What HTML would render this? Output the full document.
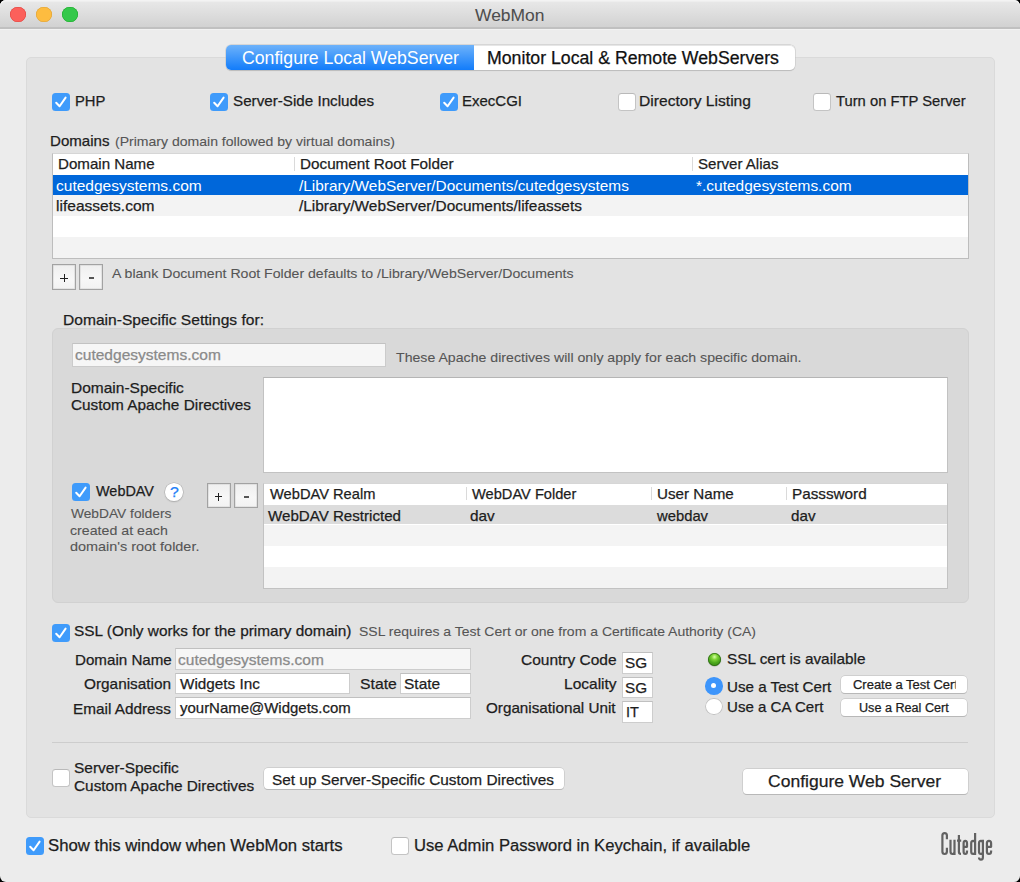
<!DOCTYPE html>
<html><head><meta charset="utf-8"><style>
html,body{margin:0;padding:0;width:1020px;height:882px;overflow:hidden;background:#000}
body{position:relative;font-family:"Liberation Sans", sans-serif}
.b{position:absolute;box-sizing:border-box}
.t{position:absolute;white-space:nowrap;font-family:"Liberation Sans", sans-serif;transform-origin:0 0}
.cb{border-radius:3.5px}
.cb.on{background:#3f9bfb}
.cb.on svg{position:absolute;left:0;top:0}
.cb.off{background:#fff;border:1px solid #c4c4c4;border-top-color:#b9b9b9}
</style></head><body>
<div class="b" style="left:0;top:0;width:1020px;height:882px;background:#ececec;border-radius:6px"></div>
<div class="b" style="left:0px;top:0px;width:1020.00px;height:29.00px;background:linear-gradient(#e8e8e8 5%,#d1d1d1 95%);border-radius:6px 6px 0 0;box-shadow:inset 0 1.5px 0 #f3f3f3"></div>
<div class="b" style="left:0px;top:27.3px;width:1020.00px;height:1.70px;background:#c0c0c0"></div>
<div class="b" style="left:0px;top:29px;width:1020.00px;height:1.00px;background:#f2f2f2"></div>
<div class="b" style="left:10.4px;top:6.6px;width:15.6px;height:15.6px;border-radius:50%;background:#fc605b;box-shadow:inset 0 0 0 0.6px #e0443e"></div>
<div class="b" style="left:36.4px;top:6.6px;width:15.6px;height:15.6px;border-radius:50%;background:#fdbc40;box-shadow:inset 0 0 0 0.6px #dea236"></div>
<div class="b" style="left:62.4px;top:6.6px;width:15.6px;height:15.6px;border-radius:50%;background:#34c84a;box-shadow:inset 0 0 0 0.6px #1aab29"></div>
<div class="t" style="left:474.50px;top:7px;font-size:17px;line-height:17px;color:#4d4d4d;transform:scaleX(1.0269);-webkit-text-stroke:0.05px #4d4d4d;">WebMon</div>
<div class="b" style="left:26px;top:57px;width:969.00px;height:761.00px;background:#e3e3e3;border:1px solid #dadada;border-radius:5px"></div>
<div class="b" style="left:226px;top:45px;width:569.30px;height:25.30px;background:#fff;border-radius:5px;box-shadow:0 0 0 0.5px #c4c4c4, 0 0.8px 0.8px rgba(0,0,0,0.2), inset 0 1px 0 #e6e6e6"></div>
<div class="b" style="left:226px;top:45px;width:248.00px;height:25.30px;background:linear-gradient(#6db2fa,#127cfa);border-radius:5px 0 0 5px"></div>
<div class="t" style="left:241.69px;top:50px;font-size:17.5px;line-height:17.5px;color:#ffffff;transform:scaleX(1.0108);">Configure Local WebServer</div>
<div class="t" style="left:486.99px;top:50px;font-size:17.5px;line-height:17.5px;color:#111;transform:scaleX(1.0118);-webkit-text-stroke:0.25px #111;">Monitor Local &amp; Remote WebServers</div>
<div class="b cb on" style="left:52px;top:93px;width:18px;height:18px"><svg width="18" height="18" viewBox="0 0 18 18"><path d="M4.2 9.8 L7.6 13.3 L13.6 4.6" fill="none" stroke="#fff" stroke-width="2" stroke-linecap="round" stroke-linejoin="round"/></svg></div>
<div class="t" style="left:74.61px;top:93px;font-size:15px;line-height:15px;color:#1d1d1d;transform:scaleX(0.9862);-webkit-text-stroke:0.25px #1d1d1d;">PHP</div>
<div class="b cb on" style="left:210.2px;top:93px;width:18px;height:18px"><svg width="18" height="18" viewBox="0 0 18 18"><path d="M4.2 9.8 L7.6 13.3 L13.6 4.6" fill="none" stroke="#fff" stroke-width="2" stroke-linecap="round" stroke-linejoin="round"/></svg></div>
<div class="t" style="left:232.69px;top:93px;font-size:15px;line-height:15px;color:#1d1d1d;transform:scaleX(1.0130);-webkit-text-stroke:0.25px #1d1d1d;">Server-Side Includes</div>
<div class="b cb on" style="left:439.6px;top:93px;width:18px;height:18px"><svg width="18" height="18" viewBox="0 0 18 18"><path d="M4.2 9.8 L7.6 13.3 L13.6 4.6" fill="none" stroke="#fff" stroke-width="2" stroke-linecap="round" stroke-linejoin="round"/></svg></div>
<div class="t" style="left:462.00px;top:93px;font-size:15px;line-height:15px;color:#1d1d1d;transform:scaleX(1.0000);-webkit-text-stroke:0.25px #1d1d1d;">ExecCGI</div>
<div class="b cb off" style="left:617.5px;top:93px;width:18px;height:18px"></div>
<div class="t" style="left:639.36px;top:93px;font-size:15px;line-height:15px;color:#1d1d1d;transform:scaleX(1.0415);-webkit-text-stroke:0.25px #1d1d1d;">Directory Listing</div>
<div class="b cb off" style="left:813.3px;top:93px;width:18px;height:18px"></div>
<div class="t" style="left:836.30px;top:93px;font-size:15px;line-height:15px;color:#1d1d1d;transform:scaleX(0.9848);-webkit-text-stroke:0.25px #1d1d1d;">Turn on FTP Server</div>
<div class="t" style="left:49.99px;top:133px;font-size:15px;line-height:15px;color:#1d1d1d;transform:scaleX(1.0052);-webkit-text-stroke:0.25px #1d1d1d;">Domains</div>
<div class="t" style="left:115.36px;top:135px;font-size:13.5px;line-height:13.5px;color:#555;transform:scaleX(1.0396);-webkit-text-stroke:0.1px #555;">(Primary domain followed by virtual domains)</div>
<div class="b" style="left:52px;top:153px;width:917.00px;height:106.00px;background:#fff;border:1px solid #bdbdbd;border-top-color:#d6d6d6"></div>
<div class="b" style="left:53px;top:175px;width:915.00px;height:20.00px;background:#0067da"></div>
<div class="b" style="left:53px;top:195px;width:915.00px;height:21.00px;background:#f3f3f3"></div>
<div class="b" style="left:53px;top:237px;width:915.00px;height:21.00px;background:#f3f3f3"></div>
<div class="b" style="left:294px;top:157px;width:1.00px;height:14.00px;background:#dadada"></div>
<div class="b" style="left:692px;top:157px;width:1.00px;height:14.00px;background:#dadada"></div>
<div class="t" style="left:57.79px;top:156px;font-size:15px;line-height:15px;color:#1d1d1d;transform:scaleX(1.0074);-webkit-text-stroke:0.25px #1d1d1d;">Domain Name</div>
<div class="t" style="left:299.58px;top:156px;font-size:15px;line-height:15px;color:#1d1d1d;transform:scaleX(1.0173);-webkit-text-stroke:0.25px #1d1d1d;">Document Root Folder</div>
<div class="t" style="left:697.59px;top:156px;font-size:15px;line-height:15px;color:#1d1d1d;transform:scaleX(1.0051);-webkit-text-stroke:0.25px #1d1d1d;">Server Alias</div>
<div class="t" style="left:56.17px;top:178px;font-size:15px;line-height:15px;color:#fff;transform:scaleX(1.0345);">cutedgesystems.com</div>
<div class="t" style="left:299.10px;top:178px;font-size:15px;line-height:15px;color:#fff;transform:scaleX(1.0259);">/Library/WebServer/Documents/cutedgesystems</div>
<div class="t" style="left:696.37px;top:178px;font-size:15px;line-height:15px;color:#fff;transform:scaleX(1.0315);">*.cutedgesystems.com</div>
<div class="t" style="left:56.16px;top:198px;font-size:15px;line-height:15px;color:#1d1d1d;transform:scaleX(1.0366);-webkit-text-stroke:0.25px #1d1d1d;">lifeassets.com</div>
<div class="t" style="left:299.10px;top:198px;font-size:15px;line-height:15px;color:#1d1d1d;transform:scaleX(1.0262);-webkit-text-stroke:0.25px #1d1d1d;">/Library/WebServer/Documents/lifeassets</div>
<div class="b" style="left:52px;top:264px;width:24.00px;height:26.00px;background:linear-gradient(#efefef,#f7f7f7 60%,#f2f2f2);border:1px solid #a2a2a2;box-shadow:inset 0 0 0 0.6px rgba(0,0,0,0.12)"></div>
<div class="b" style="left:60.1px;top:277.5px;width:7.80px;height:1.00px;background:#202020"></div>
<div class="b" style="left:63.5px;top:274.1px;width:1.00px;height:7.80px;background:#202020"></div>
<div class="b" style="left:79px;top:264px;width:24.00px;height:26.00px;background:linear-gradient(#efefef,#f7f7f7 60%,#f2f2f2);border:1px solid #a2a2a2;box-shadow:inset 0 0 0 0.6px rgba(0,0,0,0.12)"></div>
<div class="b" style="left:88.5px;top:277.3px;width:5.00px;height:1.40px;background:#555"></div>
<div class="t" style="left:112.20px;top:267px;font-size:13.5px;line-height:13.5px;color:#555;transform:scaleX(1.0449);-webkit-text-stroke:0.1px #555;">A blank Document Root Folder defaults to /Library/WebServer/Documents</div>
<div class="t" style="left:62.76px;top:312px;font-size:15px;line-height:15px;color:#1d1d1d;transform:scaleX(1.0393);-webkit-text-stroke:0.25px #1d1d1d;">Domain-Specific Settings for:</div>
<div class="b" style="left:52px;top:328px;width:917.00px;height:274.50px;background:#d9d9d9;border:1px solid #d1d1d1;border-radius:6px"></div>
<div class="b" style="left:72px;top:343px;width:314.00px;height:24.00px;background:#f6f6f6;border:1px solid #cbcbcb;border-top-color:#c2c2c2"></div>
<div class="t" style="left:75.46px;top:347px;font-size:15px;line-height:15px;color:#8a8a8a;transform:scaleX(1.0353);-webkit-text-stroke:0.25px #8a8a8a;">cutedgesystems.com</div>
<div class="t" style="left:395.80px;top:351px;font-size:13.5px;line-height:13.5px;color:#555;transform:scaleX(1.0472);-webkit-text-stroke:0.1px #555;">These Apache directives will only apply for each specific domain.</div>
<div class="t" style="left:70.57px;top:380px;font-size:15px;line-height:15px;color:#1d1d1d;transform:scaleX(1.0333);-webkit-text-stroke:0.25px #1d1d1d;">Domain-Specific</div>
<div class="t" style="left:70.58px;top:397px;font-size:15px;line-height:15px;color:#1d1d1d;transform:scaleX(1.0234);-webkit-text-stroke:0.25px #1d1d1d;">Custom Apache Directives</div>
<div class="b" style="left:263px;top:377px;width:685.00px;height:96.00px;background:#fff;border:1px solid #c2c2c2;border-top-color:#b5b5b5"></div>
<div class="b cb on" style="left:72.4px;top:483.2px;width:18px;height:18px"><svg width="18" height="18" viewBox="0 0 18 18"><path d="M4.2 9.8 L7.6 13.3 L13.6 4.6" fill="none" stroke="#fff" stroke-width="2" stroke-linecap="round" stroke-linejoin="round"/></svg></div>
<div class="t" style="left:96.00px;top:483px;font-size:15px;line-height:15px;color:#1d1d1d;transform:scaleX(0.9617);-webkit-text-stroke:0.25px #1d1d1d;">WebDAV</div>
<div class="b" style="left:165.4px;top:483.2px;width:17.60px;height:17.60px;border-radius:50%;background:#fff;box-shadow:0 0 0 0.6px #b0b0b0,0 1px 1.5px rgba(0,0,0,0.2)"></div>
<div class="t" style="left:169.67px;top:485px;font-size:14px;line-height:14px;color:#1f7ff7;transform:scaleX(1.1333);-webkit-text-stroke:0.25px #1f7ff7;">?</div>
<div class="b" style="left:206.5px;top:483.4px;width:24.10px;height:25.10px;background:linear-gradient(#efefef,#f7f7f7 60%,#f2f2f2);border:1px solid #a2a2a2;box-shadow:inset 0 0 0 0.6px rgba(0,0,0,0.12)"></div>
<div class="b" style="left:214.65px;top:496.45px;width:7.80px;height:1.00px;background:#202020"></div>
<div class="b" style="left:218.05px;top:493.05px;width:1.00px;height:7.80px;background:#202020"></div>
<div class="b" style="left:234px;top:483.4px;width:24.00px;height:25.10px;background:linear-gradient(#efefef,#f7f7f7 60%,#f2f2f2);border:1px solid #a2a2a2;box-shadow:inset 0 0 0 0.6px rgba(0,0,0,0.12)"></div>
<div class="b" style="left:243.5px;top:496.25px;width:5.00px;height:1.40px;background:#555"></div>
<div class="t" style="left:71.30px;top:507px;font-size:13.5px;line-height:13.5px;color:#555;transform:scaleX(1.0184);-webkit-text-stroke:0.1px #555;">WebDAV folders</div>
<div class="t" style="left:70.25px;top:524px;font-size:13.5px;line-height:13.5px;color:#555;transform:scaleX(1.0516);-webkit-text-stroke:0.1px #555;">created at each</div>
<div class="t" style="left:70.23px;top:540px;font-size:13.5px;line-height:13.5px;color:#555;transform:scaleX(1.0681);-webkit-text-stroke:0.1px #555;">domain's root folder.</div>
<div class="b" style="left:263px;top:483px;width:685.00px;height:106.00px;background:#fff;border:1px solid #c2c2c2;border-top-color:#d6d6d6"></div>
<div class="b" style="left:264px;top:504.5px;width:683.00px;height:19.50px;background:#dcdcdc"></div>
<div class="b" style="left:264px;top:524px;width:683.00px;height:21.50px;background:#f4f4f4;border-top:1px solid #fff"></div>
<div class="b" style="left:264px;top:567px;width:683.00px;height:21.00px;background:#f3f3f3"></div>
<div class="b" style="left:465.5px;top:487px;width:1.00px;height:13.40px;background:#dadada"></div>
<div class="b" style="left:651px;top:487px;width:1.00px;height:13.40px;background:#dadada"></div>
<div class="b" style="left:786px;top:487px;width:1.00px;height:13.40px;background:#dadada"></div>
<div class="t" style="left:269.70px;top:486px;font-size:15px;line-height:15px;color:#1d1d1d;transform:scaleX(0.9776);-webkit-text-stroke:0.25px #1d1d1d;">WebDAV Realm</div>
<div class="t" style="left:472.30px;top:486px;font-size:15px;line-height:15px;color:#1d1d1d;transform:scaleX(0.9757);-webkit-text-stroke:0.25px #1d1d1d;">WebDAV Folder</div>
<div class="t" style="left:656.59px;top:486px;font-size:15px;line-height:15px;color:#1d1d1d;transform:scaleX(1.0122);-webkit-text-stroke:0.25px #1d1d1d;">User Name</div>
<div class="t" style="left:791.68px;top:486px;font-size:15px;line-height:15px;color:#1d1d1d;transform:scaleX(1.0181);-webkit-text-stroke:0.25px #1d1d1d;">Passsword</div>
<div class="t" style="left:268.20px;top:508px;font-size:15px;line-height:15px;color:#1d1d1d;transform:scaleX(1.0076);-webkit-text-stroke:0.25px #1d1d1d;">WebDAV Restricted</div>
<div class="t" style="left:469.68px;top:508px;font-size:15px;line-height:15px;color:#1d1d1d;transform:scaleX(1.0217);-webkit-text-stroke:0.25px #1d1d1d;">dav</div>
<div class="t" style="left:656.50px;top:508px;font-size:15px;line-height:15px;color:#1d1d1d;transform:scaleX(0.9865);-webkit-text-stroke:0.25px #1d1d1d;">webdav</div>
<div class="t" style="left:790.69px;top:508px;font-size:15px;line-height:15px;color:#1d1d1d;transform:scaleX(1.0130);-webkit-text-stroke:0.25px #1d1d1d;">dav</div>
<div class="b cb on" style="left:51.6px;top:623.6px;width:18px;height:18px"><svg width="18" height="18" viewBox="0 0 18 18"><path d="M4.2 9.8 L7.6 13.3 L13.6 4.6" fill="none" stroke="#fff" stroke-width="2" stroke-linecap="round" stroke-linejoin="round"/></svg></div>
<div class="t" style="left:74.07px;top:623px;font-size:15px;line-height:15px;color:#1d1d1d;transform:scaleX(1.0257);-webkit-text-stroke:0.25px #1d1d1d;">SSL (Only works for the primary domain)</div>
<div class="t" style="left:358.96px;top:625px;font-size:13.5px;line-height:13.5px;color:#555;transform:scaleX(1.0375);-webkit-text-stroke:0.1px #555;">SSL requires a Test Cert or one from a Certificate Authority (CA)</div>
<div class="t" style="left:74.59px;top:652px;font-size:15px;line-height:15px;color:#1d1d1d;transform:scaleX(1.0096);-webkit-text-stroke:0.25px #1d1d1d;">Domain Name</div>
<div class="t" style="left:84.48px;top:676px;font-size:15px;line-height:15px;color:#1d1d1d;transform:scaleX(1.0241);-webkit-text-stroke:0.25px #1d1d1d;">Organisation</div>
<div class="t" style="left:73.48px;top:701px;font-size:15px;line-height:15px;color:#1d1d1d;transform:scaleX(1.0213);-webkit-text-stroke:0.25px #1d1d1d;">Email Address</div>
<div class="b" style="left:175px;top:647.6px;width:296.00px;height:22.40px;background:#f6f6f6;border:1px solid #cdcdcd;border-top-color:#c0c0c0"></div>
<div class="b" style="left:175px;top:672.6px;width:174.50px;height:21.80px;background:#fff;border:1px solid #cdcdcd;border-top-color:#c0c0c0"></div>
<div class="b" style="left:400.4px;top:672.6px;width:70.60px;height:21.80px;background:#fff;border:1px solid #cdcdcd;border-top-color:#c0c0c0"></div>
<div class="b" style="left:175px;top:696.8px;width:296.00px;height:22.50px;background:#fff;border:1px solid #cdcdcd;border-top-color:#c0c0c0"></div>
<div class="t" style="left:178.36px;top:652px;font-size:15px;line-height:15px;color:#8a8a8a;transform:scaleX(1.0353);-webkit-text-stroke:0.25px #8a8a8a;">cutedgesystems.com</div>
<div class="t" style="left:179.80px;top:676px;font-size:15px;line-height:15px;color:#1d1d1d;transform:scaleX(1.0179);-webkit-text-stroke:0.25px #1d1d1d;">Widgets Inc</div>
<div class="t" style="left:359.85px;top:676px;font-size:15px;line-height:15px;color:#1d1d1d;transform:scaleX(1.0500);-webkit-text-stroke:0.25px #1d1d1d;">State</div>
<div class="t" style="left:403.77px;top:676px;font-size:15px;line-height:15px;color:#1d1d1d;transform:scaleX(1.0324);-webkit-text-stroke:0.25px #1d1d1d;">State</div>
<div class="t" style="left:179.80px;top:700px;font-size:15px;line-height:15px;color:#1d1d1d;transform:scaleX(0.9976);-webkit-text-stroke:0.25px #1d1d1d;">yourName@Widgets.com</div>
<div class="t" style="left:521.47px;top:652px;font-size:15px;line-height:15px;color:#1d1d1d;transform:scaleX(1.0330);-webkit-text-stroke:0.25px #1d1d1d;">Country Code</div>
<div class="t" style="left:563.77px;top:676px;font-size:15px;line-height:15px;color:#1d1d1d;transform:scaleX(1.0340);-webkit-text-stroke:0.25px #1d1d1d;">Locality</div>
<div class="t" style="left:486.48px;top:700px;font-size:15px;line-height:15px;color:#1d1d1d;transform:scaleX(1.0157);-webkit-text-stroke:0.25px #1d1d1d;">Organisational Unit</div>
<div class="b" style="left:622px;top:651.5px;width:30.50px;height:22.00px;background:#fff;border:1px solid #cdcdcd;border-top-color:#c0c0c0"></div>
<div class="b" style="left:622px;top:676.6px;width:30.50px;height:21.60px;background:#fff;border:1px solid #cdcdcd;border-top-color:#c0c0c0"></div>
<div class="b" style="left:622px;top:700.5px;width:30.50px;height:22.50px;background:#fff;border:1px solid #cdcdcd;border-top-color:#c0c0c0"></div>
<div class="t" style="left:625.38px;top:655px;font-size:15px;line-height:15px;color:#1d1d1d;transform:scaleX(1.0200);-webkit-text-stroke:0.25px #1d1d1d;">SG</div>
<div class="t" style="left:625.38px;top:680px;font-size:15px;line-height:15px;color:#1d1d1d;transform:scaleX(1.0200);-webkit-text-stroke:0.25px #1d1d1d;">SG</div>
<div class="t" style="left:625.83px;top:704px;font-size:15px;line-height:15px;color:#1d1d1d;transform:scaleX(0.9667);-webkit-text-stroke:0.25px #1d1d1d;">IT</div>
<div class="b" style="left:707.5px;top:653.2px;width:13.00px;height:13.00px;border-radius:50%;background:radial-gradient(circle at 50% 30%,#d8ffa8 0%,#7fd438 25%,#4aa61c 55%,#2f7a10 100%);box-shadow:0 0.5px 1px rgba(0,0,0,0.3), inset 0 0 0 0.8px rgba(35,90,15,0.75)"></div>
<div class="t" style="left:727.08px;top:651px;font-size:15px;line-height:15px;color:#1d1d1d;transform:scaleX(1.0231);-webkit-text-stroke:0.25px #1d1d1d;">SSL cert is available</div>
<div class="b" style="left:705px;top:677px;width:17.60px;height:17.60px;border-radius:50%;background:#3d95fb"><div class="b" style="left:6.3px;top:6.3px;width:5px;height:5px;border-radius:50%;background:#fff"></div></div>
<div class="t" style="left:727.49px;top:679px;font-size:15px;line-height:15px;color:#1d1d1d;transform:scaleX(1.0108);-webkit-text-stroke:0.25px #1d1d1d;">Use a Test Cert</div>
<div class="b" style="left:705px;top:697.6px;width:17.60px;height:17.60px;border-radius:50%;background:#fff;box-shadow:inset 0 0 0 1px #c4c4c4"></div>
<div class="t" style="left:727.49px;top:699px;font-size:15px;line-height:15px;color:#1d1d1d;transform:scaleX(1.0053);-webkit-text-stroke:0.25px #1d1d1d;">Use a CA Cert</div>
<div class="b" style="left:840.6px;top:675.6px;width:126.90px;height:17.60px;background:#fff;border-radius:4px;box-shadow:0 0 0 0.5px #bcbcbc,0 1px 0.5px rgba(0,0,0,0.2)"></div>
<div class="b" style="left:840.6px;top:699.1px;width:126.90px;height:17.40px;background:#fff;border-radius:4px;box-shadow:0 0 0 0.5px #bcbcbc,0 1px 0.5px rgba(0,0,0,0.2)"></div>
<div class="t" style="left:853.22px;top:679px;font-size:12px;line-height:12px;color:#1d1d1d;transform:scaleX(1.0802);-webkit-text-stroke:0.25px #1d1d1d;width:94.50px;overflow:hidden;">Create a Test Cert</div>
<div class="t" style="left:859.05px;top:702px;font-size:12px;line-height:12px;color:#1d1d1d;transform:scaleX(1.0512);-webkit-text-stroke:0.25px #1d1d1d;">Use a Real Cert</div>
<div class="b" style="left:52px;top:741.5px;width:916.00px;height:1.00px;background:#cdcdcd"></div>
<div class="b cb off" style="left:52.2px;top:768.8px;width:18px;height:18px"></div>
<div class="t" style="left:74.27px;top:760px;font-size:15px;line-height:15px;color:#1d1d1d;transform:scaleX(1.0310);-webkit-text-stroke:0.25px #1d1d1d;">Server-Specific</div>
<div class="t" style="left:74.28px;top:778px;font-size:15px;line-height:15px;color:#1d1d1d;transform:scaleX(1.0246);-webkit-text-stroke:0.25px #1d1d1d;">Custom Apache Directives</div>
<div class="b" style="left:263.8px;top:767.8px;width:300.20px;height:21.60px;background:#fff;border-radius:4px;box-shadow:0 0 0 0.5px #bcbcbc,0 1px 0.5px rgba(0,0,0,0.2)"></div>
<div class="t" style="left:272.18px;top:772px;font-size:15px;line-height:15px;color:#1d1d1d;transform:scaleX(1.0248);-webkit-text-stroke:0.25px #1d1d1d;">Set up Server-Specific Custom Directives</div>
<div class="b" style="left:743.3px;top:769px;width:224.30px;height:24.70px;background:#fff;border-radius:4px;box-shadow:0 0 0 0.5px #bcbcbc,0 1px 0.5px rgba(0,0,0,0.2)"></div>
<div class="t" style="left:768.47px;top:773px;font-size:17px;line-height:17px;color:#1d1d1d;transform:scaleX(1.0305);-webkit-text-stroke:0.25px #1d1d1d;">Configure Web Server</div>
<div class="b cb on" style="left:26.3px;top:837px;width:18px;height:18px"><svg width="18" height="18" viewBox="0 0 18 18"><path d="M4.2 9.8 L7.6 13.3 L13.6 4.6" fill="none" stroke="#fff" stroke-width="2" stroke-linecap="round" stroke-linejoin="round"/></svg></div>
<div class="t" style="left:48.45px;top:838px;font-size:16px;line-height:16px;color:#1d1d1d;transform:scaleX(1.0461);-webkit-text-stroke:0.25px #1d1d1d;">Show this window when WebMon starts</div>
<div class="b cb off" style="left:390.6px;top:837.3px;width:18px;height:18px"></div>
<div class="t" style="left:413.56px;top:838px;font-size:16px;line-height:16px;color:#1d1d1d;transform:scaleX(1.0385);-webkit-text-stroke:0.25px #1d1d1d;">Use Admin Password in Keychain, if available</div>
<svg class="b" style="left:930px;top:825px" width="70" height="45" viewBox="930 825 70 45"><path d="M946.9,839.2 V835.6 Q946.9,833.2 944.65,833.2 Q942.4,833.2 942.4,835.6 V851.6 Q942.4,854 944.65,854 Q946.9,854 946.9,851.6 V847.8 M950.5,839.8 V851.6 Q950.5,854 952.5,854 Q954.5,854 954.5,851.6 M954.5,839.8 V855.1 M958.9,834.9 V851.8 Q958.9,854 961,854 M957,840.7 H961.2 M967,850.6 V851.6 Q967,854 965.3,854 Q963.6,854 963.6,851.6 V843.3 Q963.6,840.9 965.3,840.9 Q967,840.9 967,843.3 V846.8 H963.6 M975.1,843.3 Q975.1,840.9 973.15,840.9 Q971.2,840.9 971.2,843.3 V851.6 Q971.2,854 973.15,854 Q975.1,854 975.1,851.6 M975.1,832.9 V855.1 M982.9,843.3 Q982.9,840.9 980.95,840.9 Q979,840.9 979,843.3 V851.6 Q979,854 980.95,854 Q982.9,854 982.9,851.6 M982.9,839.8 V857.2 Q982.9,859.6 980.95,859.6 Q979,859.6 979,857.6 M991.1,850.6 V851.6 Q991.1,854 989,854 Q986.9,854 986.9,851.6 V843.3 Q986.9,840.9 989,840.9 Q991.1,840.9 991.1,843.3 V846.8 H986.9 " fill="none" stroke="#626262" stroke-width="2.2" stroke-linecap="butt" stroke-linejoin="round"/></svg>
</body></html>
